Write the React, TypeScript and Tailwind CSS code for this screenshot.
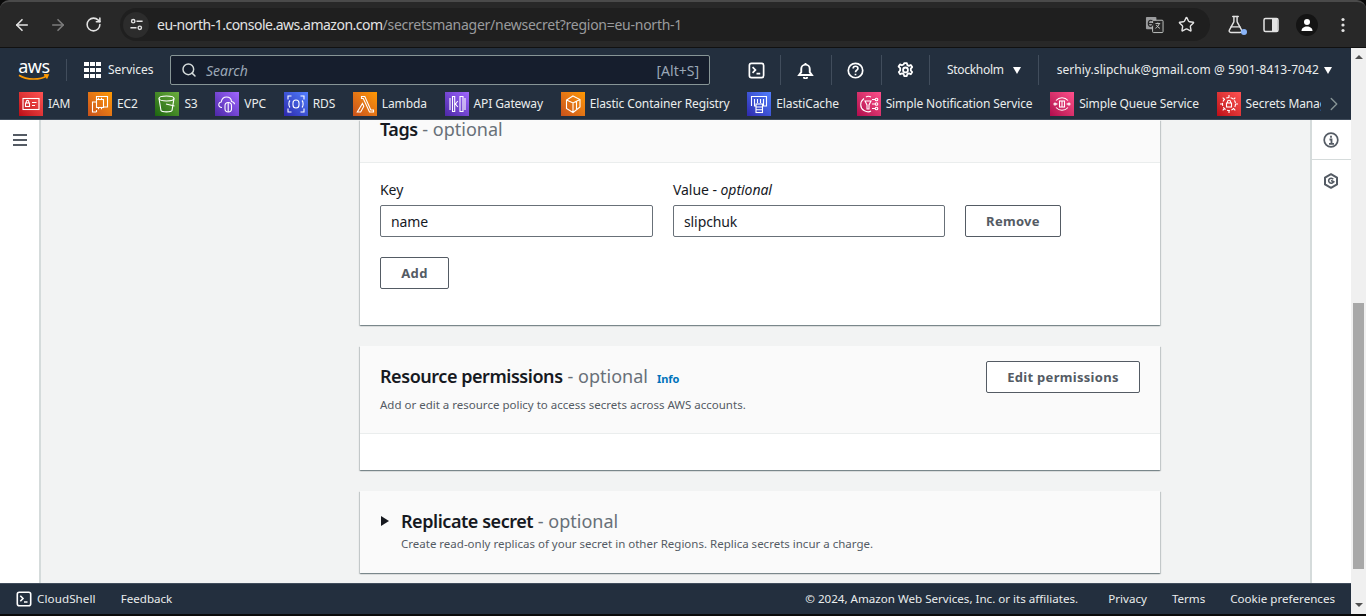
import { type ReactNode } from "react"
import { ArrowLeft, ArrowRight, ChevronRight, FlaskConical, RotateCw, Search, Star } from "lucide-react"

// Service shortcuts in the console's second nav row
const services: { name: string; bg: string; icon: ReactNode }[] = [
  {
    name: "IAM",
    bg: "bg-gradient-to-tr from-[#bd0816] to-[#ff5252]",
    icon: (
      <>
        <rect x="4" y="6.5" width="16" height="11" />
        <rect x="6.5" y="11" width="4" height="3.5" />
        <path d="M7.3 11V9.6a1.2 1.2 0 0 1 2.4 0V11M13 10.5h4.5M13 13.5h3" />
      </>
    ),
  },
  {
    name: "EC2",
    bg: "bg-gradient-to-tr from-[#c8511b] to-[#ff9900]",
    icon: (
      <>
        <path d="M8.5 7.5V4.500h11v10.500h-4M8.500 20H4.500V10h4M8.500 20v-2" />
        <rect x="8.5" y="7.5" width="7" height="8" />
        <path d="M10.500 5.800v1.500M13.500 5.800v1.500M10.500 15.700v1.500M13.500 15.700v1.500" />
      </>
    ),
  },
  {
    name: "S3",
    bg: "bg-gradient-to-tr from-[#1b660f] to-[#6cae3e]",
    icon: (
      <>
        <ellipse cx="11.5" cy="6.5" rx="7.5" ry="2.5" />
        <path d="M4 6.5 6 18.5c1 1.800 10 1.800 11 0l2-12M11 12l8.500 2" />
      </>
    ),
  },
  {
    name: "VPC",
    bg: "bg-gradient-to-tr from-[#4d27a8] to-[#a166ff]",
    icon: (
      <>
        <path d="M7 15.500c-2.500 0-3.500-1.700-3.200-3.300.2-1.300 1.300-2.200 2.400-2.200C6.800 7 9 5 11.500 5c2.800 0 4.800 2 5 4.500 1.600.3 3 1 3 2.700" />
        <rect x="10" y="10.500" width="6.500" height="9.500" rx="3.200" />
        <path d="M13.200 10.500V20" />
      </>
    ),
  },
  {
    name: "RDS",
    bg: "bg-gradient-to-tr from-[#2e27ad] to-[#527fff]",
    icon: (
      <>
        <rect x="9" y="8" width="6" height="8" rx="3" />
        <path d="M6 8.500C4.500 10 4.500 14 6 15.500M18 8.500c1.500 1.500 1.500 5.500 0 7M4 7.500V4h3.500M20 7.500V4h-3.500M4 16.500V20h3.500M20 16.500V20h-3.500" />
      </>
    ),
  },
  {
    name: "Lambda",
    bg: "bg-gradient-to-tr from-[#c8511b] to-[#ff9900]",
    icon: <path d="M8.500 4.500h3.300l6 13.500h2.700v2h-4L10.300 6.500H8.500zM9.500 11.500l1.300 2.700-3.100 5.800H4.300z" />,
  },
  {
    name: "API Gateway",
    bg: "bg-gradient-to-tr from-[#4d27a8] to-[#a166ff]",
    icon: <path d="M7.500 4.500h2.200v15H7.500zM15 4.500h3v15h-3zM5 6v12M20 6v12M12.800 9l-2.300 3 2.300 3" />,
  },
  {
    name: "Elastic Container Registry",
    bg: "bg-gradient-to-tr from-[#c8511b] to-[#ff9900]",
    icon: <path d="M12 4 19 7.500v7.500L12 20.500 5.500 16.500V8zM5.500 8 12 11l7-3.500M12 11v9.500M15.500 9.500v7.500" />,
  },
  {
    name: "ElastiCache",
    bg: "bg-gradient-to-tr from-[#2e27ad] to-[#527fff]",
    icon: (
      <>
        <path d="M4.500 14V4.500h15V14h-4M9 14H7.500V7M10.500 7v4M13.500 7v4M16.500 7v7" />
        <rect x="9" y="12" width="6.500" height="8.500" />
        <path d="M9 15h6.500M9 17.800h6.500" />
      </>
    ),
  },
  {
    name: "Simple Notification Service",
    bg: "bg-gradient-to-tr from-[#b0084d] to-[#ff4f8b]",
    icon: (
      <>
        <path d="M7 6.500C2.500 10 2.800 16 7 18.500c3 1.700 5.500 1.500 7 .5M14 5c-1.500-.8-3.800-.8-5 0" />
        <path d="M8 9h6l-2 4v4h-2v-4zM15 7.500h3M15 12h3M15 16.500h3" />
        <circle cx="19.500" cy="7.500" r="1.300" />
        <circle cx="19.500" cy="12" r="1.300" />
        <circle cx="19.500" cy="16.500" r="1.300" />
      </>
    ),
  },
  {
    name: "Simple Queue Service",
    bg: "bg-gradient-to-tr from-[#b0084d] to-[#ff4f8b]",
    icon: (
      <>
        <path d="M6 8.500a8 8 0 0 1 12 0M6 15.500a8 8 0 0 0 12 0M6 12h1.500M16.500 12H18" />
        <rect x="9.500" y="9" width="5" height="6" />
        <path d="M12 9v6" />
        <circle cx="5" cy="12" r="1" />
        <circle cx="19" cy="12" r="1" />
      </>
    ),
  },
  {
    name: "Secrets Manager",
    bg: "bg-gradient-to-tr from-[#bd0816] to-[#ff5252]",
    icon: (
      <>
        <circle cx="12" cy="12" r="6.500" strokeDasharray="3 1.500" />
        <rect x="9.500" y="11" width="5" height="4" />
        <path d="M10.500 11V9.800a1.500 1.500 0 0 1 3 0V11M12 3v2.500M12 18.500V21M3 12h2.500M18.500 12H21M5.700 5.700l1.700 1.700M16.600 16.600l1.700 1.700M18.300 5.700l-1.700 1.700M7.400 16.600l-1.700 1.700" />
      </>
    ),
  },
]

function ServiceIcon({ bg, children }: { bg: string; children: ReactNode }) {
  return (
    <span className={`flex h-6 w-6 shrink-0 items-center justify-center ${bg}`}>
      <svg viewBox="0 0 24 24" className="h-6 w-6" fill="none" stroke="white" strokeWidth="1.100">
        {children}
      </svg>
    </span>
  )
}

function ShellIcon({ size, className }: { size: number; className?: string }) {
  return (
    <svg viewBox="0 0 16 16" width={size} height={size} fill="none" stroke="white" strokeWidth="1.600" className={className}>
      <rect x="1.300" y="1.300" width="13.400" height="13.400" rx="2" />
      <path d="M4.300 4.800 7 7.500 4.300 10.200M8 11h3.500" />
    </svg>
  )
}

function NavDivider({ className }: { className: string }) {
  return <span className={`block h-[30px] w-px shrink-0 bg-[#414d5c] ${className}`} />
}

function OutlineButton({ className, children }: { className: string; children: ReactNode }) {
  return (
    <button className={`h-8 rounded-[2px] border border-[#545b64] bg-white pt-px text-[13px] font-bold tracking-[0.3px] text-[#545b64] ${className}`}>
      {children}
    </button>
  )
}

function TextField({ value, className }: { value: string; className: string }) {
  return (
    <div className={`flex h-8 items-center rounded-[2px] border border-[#687078] bg-white pt-px pl-2.5 text-[14px] tracking-[-0.1px] text-[#16191f] ${className}`}>
      {value}
    </div>
  )
}

function BrowserBar() {
  return (
    <div className="flex h-[48px] shrink-0 items-center rounded-t-[9px] border-t-2 border-b border-t-[#4a4a4a] border-b-[#111111] bg-[#282828] pl-[13px] text-[#e3e3e3]">
      <ArrowLeft size={18} strokeWidth={2.200} />
      <ArrowRight size={18} strokeWidth={2.200} className="ml-[18px] text-[#7c7c7c]" />
      <RotateCw size={17} strokeWidth={2.200} className="ml-[18px]" />
      <div className="ml-[18px] flex h-[33px] w-[1090px] items-center rounded-full bg-[#1f1f1f]">
        <span className="ml-[3px] flex h-[26px] w-[26px] items-center justify-center rounded-full bg-[#2c2c2c]">
          <svg viewBox="0 0 16 16" width="15" height="15" fill="none" stroke="#e3e3e3" strokeWidth="1.500">
            <circle cx="4.500" cy="4.500" r="1.800" />
            <path d="M8 4.500h6.500M1.500 11.500H8" />
            <circle cx="11.500" cy="11.500" r="1.800" />
          </svg>
        </span>
        <span className="ml-[8px] text-[14px] tracking-[-0.5px] whitespace-nowrap">
          eu-north-1.console.aws.amazon.com
          <span className="tracking-[-0.26px] text-[#9a9b9d]">/secretsmanager/newsecret?region=eu-north-1</span>
        </span>
        <span className="ml-auto flex items-center gap-[14px] pr-[15px]">
          <svg viewBox="0 0 20 20" width="19" height="19">
            <rect x="1" y="2" width="11" height="13" rx="1" fill="#9a9b9d" />
            <rect x="8" y="5.500" width="11" height="13" rx="1" fill="#282828" stroke="#c4c7c5" />
            <path d="M11 9h5M13.500 8v1M15 9c-.5 2-2 4-4 5M12 10.500c.8 1.500 2 3 3.800 3.500" stroke="#c4c7c5" fill="none" />
            <path d="M4 9h4c0 2-1 3-2.200 3S3.500 11 3.500 9 4.500 5.500 6 5.500c.8 0 1.400.3 1.800.8" stroke="#282828" fill="none" strokeWidth="1.200" />
          </svg>
          <Star size={17} strokeWidth={2} />
        </span>
      </div>
      <span className="relative ml-[16px]">
        <FlaskConical size={19} strokeWidth={1.800} />
        <span className="absolute right-[-2px] bottom-[-1px] h-[6px] w-[6px] rounded-full bg-[#8ab4f8]" />
      </span>
      <svg viewBox="0 0 16 16" width="16" height="16" className="ml-[18px]">
        <rect x="1" y="1.500" width="14" height="13" rx="1.500" fill="none" stroke="#e3e3e3" strokeWidth="1.500" />
        <rect x="9" y="2" width="5.500" height="12" fill="#e3e3e3" />
      </svg>
      <span className="ml-[17px] flex h-[22px] w-[22px] items-center justify-center rounded-full bg-[#141414]">
        <svg viewBox="0 0 16 16" width="16" height="16" fill="#ffffff">
          <circle cx="8" cy="5" r="3" />
          <path d="M2.500 14c0-3 2.500-4.500 5.500-4.500s5.500 1.500 5.500 4.500z" />
        </svg>
      </span>
      <svg viewBox="0 0 4 16" width="4" height="16" fill="#e3e3e3" className="ml-[23px]">
        <circle cx="2" cy="2.500" r="1.600" />
        <circle cx="2" cy="8" r="1.600" />
        <circle cx="2" cy="13.500" r="1.600" />
      </svg>
    </div>
  )
}

function ConsoleNav() {
  return (
    <div className="h-[72px] shrink-0 border-b border-[#414d5c] bg-[#232f3e] text-[12px] text-[#eaeded]">
      <div className="flex h-[44px] items-center pl-[18px]">
        <div className="flex w-[32px] flex-col items-center">
          <span className="h-[15px] text-[18px] leading-[14px] tracking-[-0.4px] text-white">aws</span>
          <svg viewBox="0 0 32 7" width="32" height="7" fill="none" stroke="#ff9900" strokeWidth="1.700">
            <path d="M1 1.200c8 5 21 5 28 .5M26 .8l4 .2-1.500 3.500" />
          </svg>
        </div>
        <NavDivider className="ml-[16px] !h-[22px]" />
        <span className="ml-[17px] grid grid-cols-3 gap-[1.500px]">
          {Array.from({ length: 9 }).map((_, i) => (
            <span key={i} className="h-[4.500px] w-[4.500px] bg-white" />
          ))}
        </span>
        <span className="ml-[7.500px] w-[62px] tracking-[-0.05px]">Services</span>
        <div className="flex h-[30px] w-[540px] items-center rounded-[2px] border border-[#879596] bg-[#161e2d] pr-[10px] pl-[10px] text-[14px]">
          <Search size={16} strokeWidth={2.200} className="text-[#d5dbdb]" />
          <span className="ml-[9px] text-[#9ba7b6] italic">Search</span>
          <span className="ml-auto text-[#9ba7b6]">[Alt+S]</span>
        </div>
        <ShellIcon size={17} className="ml-[38px] shrink-0" />
        <NavDivider className="ml-[15px]" />
        <svg viewBox="0 0 16 16" width="17" height="17" fill="none" stroke="white" strokeWidth="1.800" className="ml-[16px] shrink-0">
          <path d="M2 12.200h12L12 9.500V6.500a4 4 0 0 0-8 0v3z" />
          <path d="M6.500 14a1.500 1.500 0 0 0 3 0M8 1v1.500" />
        </svg>
        <NavDivider className="ml-[17px]" />
        <svg viewBox="0 0 16 16" width="17" height="17" fill="none" stroke="white" strokeWidth="1.600" className="ml-[15px] shrink-0">
          <circle cx="8" cy="8" r="6.800" />
          <path d="M5.800 6.200c0-3 4.500-2.800 4.500-.2 0 1.700-2.300 1.800-2.300 3.700M8 11v1.500" />
        </svg>
        <NavDivider className="ml-[17px]" />
        <svg viewBox="0 0 16 16" width="17" height="17" fill="none" stroke="white" strokeWidth="1.700" className="ml-[15px] shrink-0">
          <path d="M6.800 1h2.400l.5 1.900 1.500.7 1.800-.8 1.300 2-1.300 1.500v1.700l1.300 1.500-1.300 2-1.800-.8-1.500.7-.5 1.900H6.800l-.5-1.900-1.500-.7-1.800.8-1.300-2 1.300-1.500V5.800L1.500 4.300l1.300-2 1.800.8 1.500-.7z" strokeLinejoin="round" />
          <circle cx="8" cy="7.500" r="2.300" />
        </svg>
        <NavDivider className="ml-[15px]" />
        <span className="ml-[17px] tracking-[-0.3px]">Stockholm</span>
        <span className="ml-[9px] h-0 w-0 border-x-[4.500px] border-t-[7px] border-x-transparent border-t-white" />
        <NavDivider className="ml-[17px]" />
        <span className="ml-[18px] tracking-[0.05px] whitespace-nowrap">serhiy.slipchuk@gmail.com @ 5901-8413-7042</span>
        <span className="ml-[5px] h-0 w-0 border-x-[4.500px] border-t-[7px] border-x-transparent border-t-white" />
      </div>
      <div className="flex h-[27px] items-start pl-[19px]">
        <div className="flex w-[1302px] gap-[17.700px] overflow-hidden tracking-[-0.12px] whitespace-nowrap">
          {services.map((s) => (
            <span key={s.name} className="flex shrink-0 items-center gap-[5px]">
              <ServiceIcon bg={s.bg}>{s.icon}</ServiceIcon>
              <span>{s.name}</span>
            </span>
          ))}
        </div>
        <ChevronRight size={22} strokeWidth={1.500} className="mt-px ml-[2px] text-[#879596]" />
      </div>
    </div>
  )
}

function Card({ className, children }: { className: string; children: ReactNode }) {
  return <section className={`w-[800px] bg-white shadow-[0_1px_1px_0_rgba(0,28,36,0.3),1px_1px_1px_0_rgba(0,28,36,0.15),-1px_1px_1px_0_rgba(0,28,36,0.15)] ${className}`}>{children}</section>
}

function Heading({ children }: { children: ReactNode }) {
  return <b className="font-[650] tracking-[-0.45px] text-[#16191f]">{children}</b>
}

function Main() {
  return (
    <div className="min-w-0 flex-1 bg-[#f2f3f3] pl-[319px]">
      <Card className="h-[205px]">
        <div className="h-[43px] border-b border-[#eaeded] bg-[#fafafa] pl-5 text-[18px] leading-[19px] text-[#687078]">
          <Heading>Tags</Heading> - optional
        </div>
        <div className="px-5 pt-[18px]">
          <div className="flex">
            <div className="w-[273px]">
              <div className="mb-[6px] text-[14px] leading-[18px] tracking-[-0.05px] text-[#16191f]">Key</div>
              <TextField value="name" className="w-[273px]" />
            </div>
            <div className="ml-5">
              <div className="mb-[6px] text-[14px] leading-[18px] tracking-[-0.05px] text-[#16191f]">Value - <i>optional</i></div>
              <TextField value="slipchuk" className="w-[272px]" />
            </div>
            <OutlineButton className="mt-[24px] ml-5 w-[96px]">Remove</OutlineButton>
          </div>
          <OutlineButton className="mt-5 w-[69px]">Add</OutlineButton>
        </div>
      </Card>
      <Card className="mt-[21px] h-[124px]">
        <div className="flex h-[88px] justify-between border-b border-[#eaeded] bg-[#fafafa] px-5 pt-[15px]">
          <div>
            <div className="flex items-baseline text-[18px] leading-[30px] text-[#687078]">
              <Heading>Resource permissions</Heading>
              <span className="ml-[5px]">- optional</span>
              <span className="ml-[9px] text-[11px] font-bold text-[#0073bb]">Info</span>
            </div>
            <div className="mt-[3px] text-[11.500px] leading-[16px] text-[#545b64]">Add or edit a resource policy to access secrets across AWS accounts.</div>
          </div>
          <OutlineButton className="w-[154px]">Edit permissions</OutlineButton>
        </div>
      </Card>
      <Card className="mt-[21px] h-[82px]">
        <div className="flex h-full bg-[#fafafa] pt-[15px] pl-[21px]">
          <span className="mt-[10px] h-0 w-0 border-y-[5px] border-l-[8px] border-y-transparent border-l-[#16191f]" />
          <div className="ml-[12px]">
            <div className="text-[18px] leading-[30px] text-[#687078]">
              <Heading>Replicate secret</Heading> - optional
            </div>
            <div className="text-[11.500px] leading-[15px] text-[#545b64]">Create read-only replicas of your secret in other Regions. Replica secrets incur a charge.</div>
          </div>
        </div>
      </Card>
    </div>
  )
}

function Rail() {
  return (
    <div className="w-[41px] shrink-0 border-l-2 border-[#d5dbdb] bg-white">
      <div className="flex h-[40px] items-center justify-center border-b border-[#d5dbdb] pr-px">
        <svg viewBox="0 0 16 16" width="16" height="16" fill="none" stroke="#545b64" strokeWidth="1.700">
          <circle cx="8" cy="8" r="6.800" />
          <path d="M8 3.800v2M6.500 7.500H8.500V11.500M6 11.800h5" strokeWidth="1.800" />
        </svg>
      </div>
      <div className="flex h-[42px] items-center justify-center pr-px">
        <svg viewBox="0 0 16 16" width="16" height="16" fill="none" stroke="#545b64" strokeWidth="2">
          <path d="M8 1.200 14 4.600v6.800L8 14.800 2 11.400V4.600z" strokeLinejoin="round" />
          <path d="M10.200 6.300A2.500 2.500 0 1 0 10.300 9M8 7.500l3.500 1.500" strokeWidth="1.600" />
        </svg>
      </div>
    </div>
  )
}

function Footer() {
  return (
    <div className="flex h-[31px] shrink-0 items-center border-t border-[#414d5c] bg-[#232f3e] pr-4 pl-4 text-[11.600px] text-[#eaeded]">
      <ShellIcon size={16} />
      <span className="ml-[5px] tracking-[0.1px]">CloudShell</span>
      <span className="ml-[25px]">Feedback</span>
      <span className="ml-auto">© 2024, Amazon Web Services, Inc. or its affiliates.</span>
      <span className="ml-[30px]">Privacy</span>
      <span className="ml-[25px]">Terms</span>
      <span className="ml-[25px]">Cookie preferences</span>
    </div>
  )
}

function Scrollbar() {
  return (
    <div className="flex w-[15px] shrink-0 flex-col items-center bg-[#f0f0f0] pt-[7px]">
      <span className="h-0 w-0 border-x-[4px] border-b-[4px] border-x-transparent border-b-[#505050]" />
      <span className="mt-[244px] h-[266px] w-[11px] bg-[#a8a8a8]" />
      <span className="mt-[34px] h-0 w-0 border-x-[4px] border-t-[4px] border-x-transparent border-t-[#505050]" />
    </div>
  )
}

export default function App() {
  return (
    <div className="flex h-[616px] w-[1366px] flex-col overflow-hidden bg-[#0a0a0a] font-['Noto_Sans',sans-serif]">
      <BrowserBar />
      <div className="flex h-[566px] shrink-0">
        <div className="flex min-w-0 flex-1 flex-col">
          <ConsoleNav />
          <div className="flex min-h-0 flex-1">
            <div className="w-[41px] shrink-0 border-r-2 border-[#d5dbdb] bg-white pt-[14px] pl-[13px]">
              <svg viewBox="0 0 14 12" width="14" height="12" fill="#545b64">
                <rect width="14" height="2" />
                <rect y="5" width="14" height="2" />
                <rect y="10" width="14" height="2" />
              </svg>
            </div>
            <Main />
            <Rail />
          </div>
          <Footer />
        </div>
        <Scrollbar />
      </div>
    </div>
  )
}
